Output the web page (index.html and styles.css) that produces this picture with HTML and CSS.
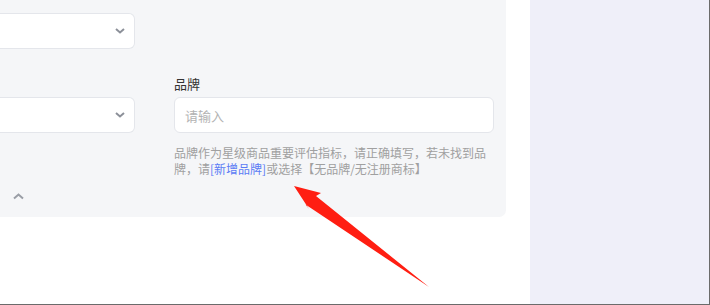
FILE: index.html
```html
<!DOCTYPE html>
<html lang="zh">
<head>
<meta charset="utf-8">
<link rel="stylesheet" href="styles.css">
</head>
<body>
<div class="frame">
  <div class="main">
    <div class="panel">
      <div class="form">
        <div class="select r1">
          <svg class="chev" width="10" height="6" viewBox="0 0 10 6"><path d="M1 1 L5 4.5 L9 1" fill="none" stroke="#8c9099" stroke-width="2"/></svg>
        </div>
        <div class="label">品牌</div>
        <div class="select r3">
          <svg class="chev" width="10" height="6" viewBox="0 0 10 6"><path d="M1 1 L5 4.5 L9 1" fill="none" stroke="#8c9099" stroke-width="2"/></svg>
        </div>
        <div class="input"><span class="ph">请输入</span></div>
        <p class="help">品牌作为星级商品重要评估指标，请正确填写，若未找到品牌，请<a class="link">[新增品牌]</a>或选择【无品牌/无注册商标】</p>
        <div class="collapse">
          <svg width="11" height="7" viewBox="0 0 11 7"><path d="M1 5.5 L5.5 1.5 L10 5.5" fill="none" stroke="#9a9ea6" stroke-width="2"/></svg>
        </div>
      </div>
    </div>
  </div>
  <div class="side"></div>
  <svg class="arrow" width="710" height="305" viewBox="0 0 710 305">
    <polygon points="294,186 321,193 316,196 429,287 305.5,204.5 309,209" fill="#ff1e12"/>
  </svg>
</div>
</body>
</html>
```
FILE: styles.css
```css
html, body {
  margin: 0;
  padding: 0;
  background: #ffffff;
}
body {
  font-family: "Noto Sans CJK SC", "Noto Sans", sans-serif;
}
.frame {
  position: relative;
  width: 709px;
  height: 304px;
  display: flex;
  border-right: 1px solid #6b6b6b;
  border-bottom: 1px solid #6b6b6b;
  overflow: hidden;
}
.main {
  width: 530px;
  background: #ffffff;
}
.side {
  flex: 1;
  background: #efeff9;
}
.panel {
  width: 506px;
  background: #f5f6f8;
  border-bottom-right-radius: 7px;
  padding: 13px 0 18px 0;
  box-sizing: border-box;
  height: 217px;
}
.form {
  display: grid;
  grid-template-columns: 135px 320px;
  grid-template-rows: 36px 48px 36px auto auto;
  column-gap: 39px;
}
.select {
  background: #ffffff;
  border: 1px solid #e4e6eb;
  border-left: none;
  border-radius: 0 6px 6px 0;
  display: flex;
  align-items: center;
  justify-content: flex-end;
  padding-right: 9px;
}
.r1 { grid-column: 1; grid-row: 1; }
.r3 { grid-column: 1; grid-row: 3; }
.chev { display: block; }
.label {
  grid-column: 2;
  grid-row: 2;
  align-self: end;
  font-size: 13px;
  line-height: 20px;
  color: #333333;
  margin-bottom: 3px;
}
.input {
  grid-column: 2;
  grid-row: 3;
  background: #ffffff;
  border: 1px solid #e4e6eb;
  border-radius: 6px;
  display: flex;
  align-items: center;
  padding-left: 10px;
}
.ph {
  font-size: 13px;
  color: #b3b3b3;
}
.help {
  grid-column: 2;
  grid-row: 4;
  margin: 12px 0 0 0;
  font-size: 12px;
  line-height: 16px;
  color: #a0a0a0;
}
.link {
  color: #5b7cf5;
  text-decoration: none;
}
.collapse {
  grid-column: 1;
  grid-row: 5;
  padding-left: 13px;
  margin-top: 16px;
}
.collapse svg { display: block; }
.arrow {
  position: absolute;
  left: 0;
  top: 0;
  pointer-events: none;
}
```
